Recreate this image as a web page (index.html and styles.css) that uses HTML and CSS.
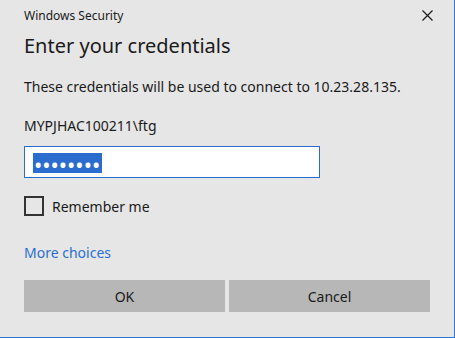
FILE: index.html
```html
<!DOCTYPE html>
<html lang="en">
<head>
    <meta charset="UTF-8">
    <title>Windows Security</title>
    <link rel="stylesheet" href="styles.css">
</head>
<body>
    <div class="dialog">
        <div class="title-bar">
            <span class="title">Windows Security</span>
            <span class="close">
                <svg width="11" height="11" viewBox="0 0 11 11">
                    <path d="M0.5 0.5 L10.5 10.5 M10.5 0.5 L0.5 10.5" stroke="#1a1a1a" stroke-width="1.2" fill="none"/>
                </svg>
            </span>
        </div>

        <h1 class="heading">Enter your credentials</h1>
        <p class="info">These credentials will be used to connect to 10.23.28.135.</p>
        <p class="user">MYPJHAC100211\ftg</p>

        <div class="password-box">
            <span class="selection">••••••••</span>
        </div>

        <label class="remember">
            <span class="checkbox"></span>
            <span>Remember me</span>
        </label>

        <a class="more" href="#">More choices</a>

        <div class="buttons">
            <button class="btn">OK</button>
            <button class="btn">Cancel</button>
        </div>
    </div>
</body>
</html>
```

FILE: styles.css
```css
body {
    margin: 0;
    background-color: #e6e6e6;
    font-family: 'Noto Sans', 'Segoe UI', sans-serif;
    color: #1a1a1a;
}

.dialog {
    width: 406px;
    height: 337px;
    border-right: 1px solid #2b78d4;
    border-bottom: 1px solid #2b78d4;
    background-color: #e6e6e6;
    padding: 0 24px;
    display: flex;
    flex-direction: column;
}

.title-bar {
    height: 30px;
    display: flex;
    justify-content: space-between;
    align-items: center;
}

.title {
    font-size: 12px;
}

.close {
    display: flex;
    margin-right: -3px;
}

.heading {
    margin: 2px 0 0 0;
    font-size: 20px;
    font-weight: normal;
    line-height: 28px;
}

.info, .user {
    margin: 0;
    font-size: 14px;
    line-height: 20px;
}

.info {
    margin-top: 17px;
}

.user {
    margin-top: 19px;
}

.password-box {
    margin-top: 10px;
    width: 296px;
    height: 32px;
    border: 1px solid #2b6ccf;
    background-color: white;
    box-sizing: border-box;
    padding: 6px 8px;
    display: flex;
    align-items: flex-start;
}

.selection {
    height: 20px;
    line-height: 22px;
    padding: 0 2px 0 1px;
    background-color: #2b6ccf;
    color: white;
    font-size: 22px;
    white-space: nowrap;
}

.remember {
    margin-top: 18px;
    display: flex;
    align-items: center;
    gap: 8px;
    font-size: 14px;
}

.checkbox {
    width: 20px;
    height: 20px;
    border: 2px solid #333;
    box-sizing: border-box;
}

.more {
    margin-top: 27px;
    font-size: 14px;
    color: #2b6fd1;
    text-decoration: none;
}

.buttons {
    margin-top: 18px;
    display: grid;
    grid-template-columns: 201px 201px;
    gap: 4px;
}

.btn {
    height: 32px;
    border: none;
    background-color: #b7b7b7;
    font-family: inherit;
    font-size: 14px;
    color: #1a1a1a;
}
```
